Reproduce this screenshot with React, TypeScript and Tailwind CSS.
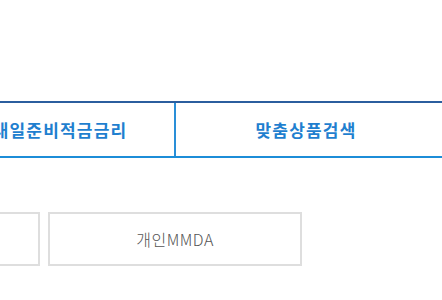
import React from "react";

const tabs = [
  { label: "내일준비적금금리", width: "w-[230px]" },
  { label: "맞춤상품검색", width: "w-[260px]" },
];

const products = ["내일준비적금", "개인MMDA"];

export default function App() {
  return (
    <main
      className="w-[442px] h-[300px] bg-white overflow-hidden"
      style={{ fontFamily: '"Noto Sans CJK KR", "Noto Sans", sans-serif' }}
    >
      <div className="pt-[101px]">
        <div className="flex ml-[-54px] border-t-2 border-[#2b5e9e] border-b-2 border-b-[#1c8dd8] w-[600px]">
          {tabs.map((tab, index) => (
            <div
              key={index}
              className={`${tab.width} h-[53px] flex items-center justify-center text-[17px] font-bold text-[#1f7fcf] tracking-[1.2px] ${
                index === 0 ? "border-r-2 border-[#2a8fd8]" : ""
              }`}
            >
              {tab.label}
            </div>
          ))}
        </div>

        <div className="flex gap-2 mt-[54px] ml-[-214px]">
          {products.map((name, index) => (
            <button
              key={index}
              className="w-[254px] h-[54px] shrink-0 border-2 border-[#dedede] bg-white text-[16px] font-light text-[#555] tracking-[0.5px] flex items-center justify-center"
            >
              {index === 1 ? name : ""}
            </button>
          ))}
        </div>
      </div>
    </main>
  );
}
